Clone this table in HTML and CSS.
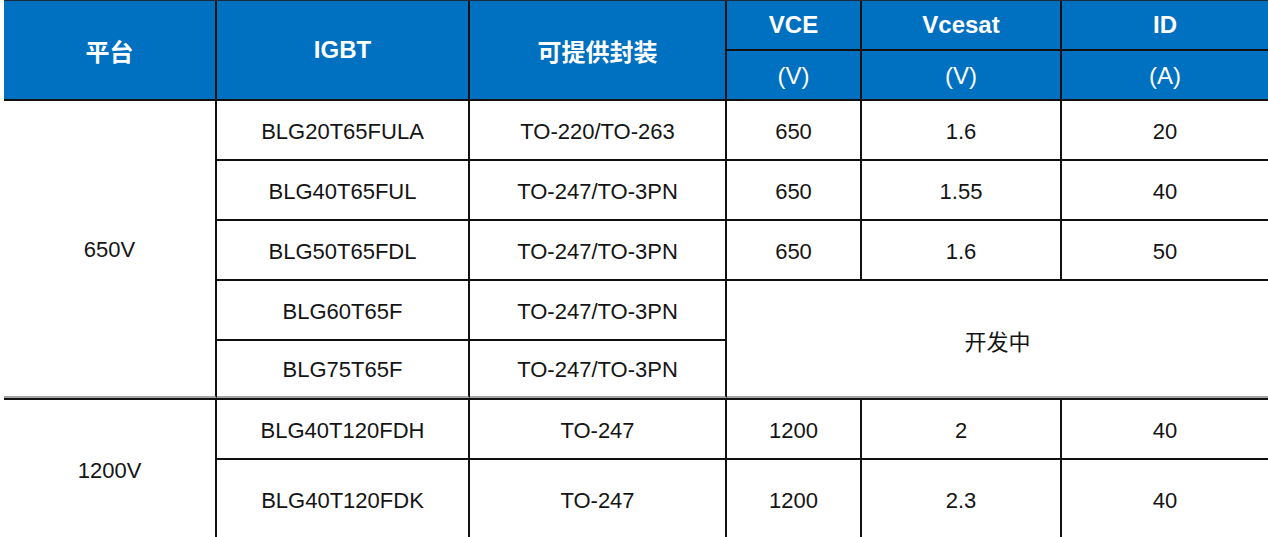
FILE: index.html
```html
<!DOCTYPE html>
<html lang="zh">
<head>
<meta charset="utf-8">
<title>IGBT 产品列表</title>
<link rel="stylesheet" href="styles.css">
</head>
<body>
<table class="spec">
  <colgroup>
    <col class="c-plat"><col class="c-igbt"><col class="c-pkg"><col class="c-vce"><col class="c-vsat"><col class="c-id">
  </colgroup>
  <thead>
    <tr class="h-row">
      <th rowspan="2">平台</th>
      <th rowspan="2">IGBT</th>
      <th rowspan="2">可提供封装</th>
      <th>VCE</th>
      <th>Vcesat</th>
      <th class="last">ID</th>
    </tr>
    <tr class="h-row">
      <th class="unit">(V)</th>
      <th class="unit">(V)</th>
      <th class="unit last">(A)</th>
    </tr>
  </thead>
  <tbody>
    <tr class="row">
      <td rowspan="5" class="plat sec-end">650V</td>
      <td>BLG20T65FULA</td>
      <td>TO-220/TO-263</td>
      <td>650</td>
      <td>1.6</td>
      <td class="last">20</td>
    </tr>
    <tr class="row">
      <td>BLG40T65FUL</td>
      <td>TO-247/TO-3PN</td>
      <td>650</td>
      <td>1.55</td>
      <td class="last">40</td>
    </tr>
    <tr class="row">
      <td>BLG50T65FDL</td>
      <td>TO-247/TO-3PN</td>
      <td>650</td>
      <td>1.6</td>
      <td class="last">50</td>
    </tr>
    <tr class="row">
      <td>BLG60T65F</td>
      <td>TO-247/TO-3PN</td>
      <td colspan="3" rowspan="2" class="last sec-end">开发中</td>
    </tr>
    <tr class="row-end">
      <td class="sec-end">BLG75T65F</td>
      <td class="sec-end">TO-247/TO-3PN</td>
    </tr>
    <tr class="row-start">
      <td rowspan="2" class="plat sec-start">1200V</td>
      <td class="sec-start">BLG40T120FDH</td>
      <td class="sec-start">TO-247</td>
      <td class="sec-start">1200</td>
      <td class="sec-start">2</td>
      <td class="sec-start last">40</td>
    </tr>
    <tr class="row-tall">
      <td>BLG40T120FDK</td>
      <td>TO-247</td>
      <td>1200</td>
      <td>2.3</td>
      <td class="last">40</td>
    </tr>
  </tbody>
</table>
</body>
</html>
```

FILE: styles.css
```css
html, body {
  margin: 0;
  padding: 0;
  background: #ffffff;
  overflow: hidden;
}

body {
  font-family: "Liberation Sans", Arial, "Noto Sans CJK SC", sans-serif;
}

.spec {
  margin-left: 4px;
  width: 1264px;
  table-layout: fixed;
  border-collapse: separate;
  border-spacing: 0;
  border-top: 1px solid #1b2b3a;
}

.c-plat { width: 213px; }
.c-igbt { width: 253px; }
.c-pkg  { width: 257px; }
.c-vce  { width: 135px; }
.c-vsat { width: 200px; }
.c-id   { width: 206px; }

.spec th,
.spec td {
  box-sizing: border-box;
  padding: 0;
  text-align: center;
  vertical-align: middle;
  border-right: 2px solid #111111;
  border-bottom: 2px solid #111111;
  white-space: nowrap;
}

.spec .last {
  border-right: none;
}

.spec th {
  background: #0070c0;
  color: #ffffff;
  font-weight: 700;
  font-size: 24px;
  font-family: "Liberation Sans", Arial, "Noto Sans CJK SC", sans-serif;
}

.spec th.unit {
  font-weight: 400;
  font-size: 24px;
  padding-top: 2px;
}

.spec td {
  color: #141414;
  font-size: 22px;
  background: #ffffff;
  padding-top: 3px;
}

.h-row { height: 50px; }
.row { height: 60px; }
.row-end { height: 57px; }
.row-start { height: 62px; }
.row-tall { height: 80px; }

.spec td.sec-end {
  border-bottom: 2px solid #a6a6a6;
}

.spec td.sec-start {
  border-top: 2px solid #111111;
}
```
